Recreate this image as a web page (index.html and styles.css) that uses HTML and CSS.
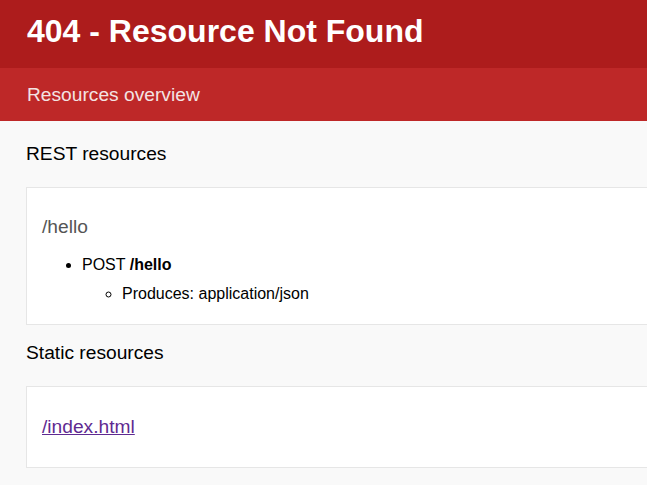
FILE: index.html
```
<!DOCTYPE html>
<html>
<head>
<meta charset="utf-8">
<title>Internal Server Error - Resource Not Found</title>
<link rel="stylesheet" href="styles.css">
</head>
<body>
<div class="page">
  <header class="header">
    <h1 class="title">404 - Resource Not Found</h1>
  </header>
  <div class="subheader">
    <div class="subtitle">Resources overview</div>
  </div>
  <main class="content">
    <h2 class="section-title">REST resources</h2>
    <div class="card card-rest">
      <h3 class="path">/hello</h3>
      <ul class="methods">
        <li>POST <strong>/hello</strong>
          <ul class="details">
            <li>Produces: application/json</li>
          </ul>
        </li>
      </ul>
    </div>
    <h2 class="section-title section-static">Static resources</h2>
    <div class="card card-static">
      <a class="link" href="#">/index.html</a>
    </div>
  </main>
</div>
</body>
</html>
```
FILE: styles.css
```
html, body {
  margin: 0;
  padding: 0;
}
body {
  background: #f9f9f9;
  font-family: "Liberation Sans", Arial, sans-serif;
  color: #000;
  width: 647px;
  height: 485px;
  overflow: hidden;
}
.page {
  overflow: hidden;
}
.header {
  background: #ad1c1c;
  padding: 9px 0 15px 27px;
}
.title {
  margin: 0;
  font-size: 32px;
  line-height: 44px;
  font-weight: 700;
  color: #fff;
}
.subheader {
  background: #be2828;
  padding: 13px 0 13px 27px;
}
.subtitle {
  font-size: 19.2px;
  line-height: 27px;
  color: #f3e3e3;
}
.content {
  padding: 19px 0 0 26px;
}
.section-title {
  margin: 0 0 20px;
  font-size: 19.2px;
  line-height: 27px;
  font-weight: 400;
}
.section-static {
  margin-top: 14px;
}
.card {
  background: #fff;
  border: 1px solid #e6e6e6;
  margin-right: -20px;
  padding: 0 15px;
}
.card-rest {
  padding-top: 25px;
  padding-bottom: 18px;
}
.card-static {
  padding-top: 26px;
  padding-bottom: 27px;
}
.path {
  margin: 0 0 13px;
  font-size: 19.2px;
  line-height: 27px;
  font-weight: 400;
  color: #555;
}
.methods {
  margin: 0;
  padding-left: 40px;
  font-size: 16px;
  line-height: 24px;
}
.details {
  margin: 5px 0 0;
  padding-left: 40px;
  list-style-type: circle;
}
.link {
  display: inline-block;
  font-size: 19.2px;
  line-height: 27px;
  color: #5f2a91;
  text-decoration: underline;
}
```
